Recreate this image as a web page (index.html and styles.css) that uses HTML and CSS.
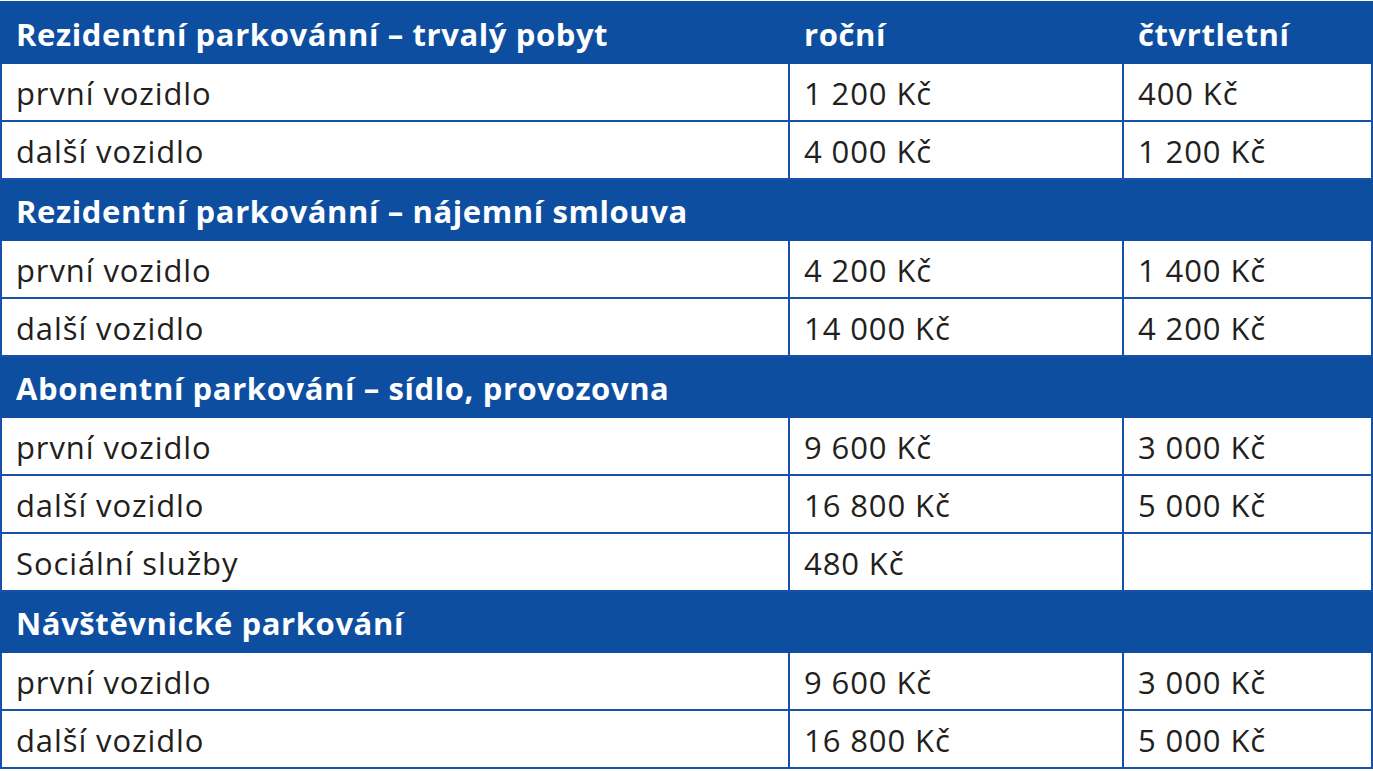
FILE: index.html
```html
<!DOCTYPE html>
<html lang="cs">
<head>
<meta charset="utf-8">
<title>Parkování – ceník</title>
<link rel="stylesheet" href="styles.css">
</head>
<body>
<table class="pricing">
  <colgroup>
    <col class="c1"><col class="c2"><col class="c3">
  </colgroup>
  <tr class="head">
    <th>Rezidentní parkovánní – trvalý pobyt</th><th>roční</th><th>čtvrtletní</th>
  </tr>
  <tr class="row"><td>první vozidlo</td><td>1 200 Kč</td><td>400 Kč</td></tr>
  <tr class="row"><td>další vozidlo</td><td>4 000 Kč</td><td>1 200 Kč</td></tr>
  <tr class="head"><th colspan="3">Rezidentní parkovánní – nájemní smlouva</th></tr>
  <tr class="row"><td>první vozidlo</td><td>4 200 Kč</td><td>1 400 Kč</td></tr>
  <tr class="row"><td>další vozidlo</td><td>14 000 Kč</td><td>4 200 Kč</td></tr>
  <tr class="head"><th colspan="3">Abonentní parkování – sídlo, provozovna</th></tr>
  <tr class="row"><td>první vozidlo</td><td>9 600 Kč</td><td>3 000 Kč</td></tr>
  <tr class="row"><td>další vozidlo</td><td>16 800 Kč</td><td>5 000 Kč</td></tr>
  <tr class="row"><td>Sociální služby</td><td>480 Kč</td><td></td></tr>
  <tr class="head"><th colspan="3">Návštěvnické parkování</th></tr>
  <tr class="row"><td>první vozidlo</td><td>9 600 Kč</td><td>3 000 Kč</td></tr>
  <tr class="row"><td>další vozidlo</td><td>16 800 Kč</td><td>5 000 Kč</td></tr>
</table>
</body>
</html>
```
FILE: styles.css
```css
html, body {
  margin: 0;
  padding: 0;
  background: #ffffff;
}
.pricing {
  margin-top: 1px;
  width: 1371px;
  border-collapse: collapse;
  table-layout: fixed;
  font-family: "Open Sans", "Liberation Sans", sans-serif;
  color: #231f20;
}
.c1 { width: 788px; }
.c2 { width: 334px; }
.c3 { width: 249px; }
.head th {
  background: #0d4ea1;
  color: #ffffff;
  font-weight: 700;
  font-size: 31px;
  text-align: left;
  height: 61px;
  padding: 2px 0 0 14px;
  border: 2px solid #0d4ea1;
  box-sizing: border-box;
  letter-spacing: 0.6px;
  white-space: nowrap;
}
.row td {
  height: 58px;
  padding: 2px 0 0 14px;
  font-size: 31px;
  border: 2px solid #1552a8;
  box-sizing: border-box;
  letter-spacing: 0.9px;
  white-space: nowrap;
}
```
